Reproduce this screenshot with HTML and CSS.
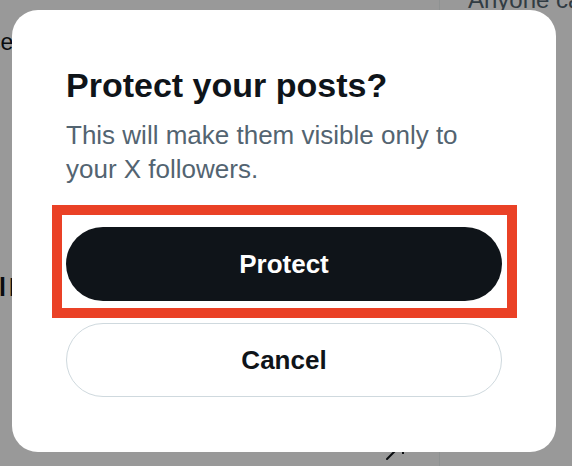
FILE: index.html
```html
<!DOCTYPE html>
<html lang="en">
<head>
<meta charset="utf-8">
<title>Protect your posts?</title>
<link rel="stylesheet" href="styles.css">
</head>
<body>
  <div class="page">
    <div class="main">
      <p class="frag frag-notice">Notice</p>
      <p class="frag frag-bars">lI</p>
      <svg class="frag-icon" viewBox="0 0 24 24" width="24" height="24" aria-hidden="true">
        <path d="M3 22 L13 12" stroke="#0f1419" stroke-width="2" stroke-linecap="round" fill="none"/>
        <path d="M19 14 L19 17" stroke="#0f1419" stroke-width="2" fill="none"/>
      </svg>
    </div>
    <div class="side">
      <p class="side-text">Anyone can reply</p>
    </div>
  </div>

  <div class="overlay">
    <div class="modal" role="dialog" aria-labelledby="dlg-title">
      <h1 id="dlg-title" class="modal-title">Protect your posts?</h1>
      <p class="modal-text">This will make them visible only to your X followers.</p>
      <div class="actions">
        <div class="highlight-wrap">
          <button class="btn btn-primary" type="button">Protect</button>
          <span class="highlight" aria-hidden="true"></span>
        </div>
        <button class="btn btn-secondary" type="button">Cancel</button>
      </div>
    </div>
  </div>
</body>
</html>
```

FILE: styles.css
```css
* { box-sizing: border-box; }

html, body {
  margin: 0;
  padding: 0;
}

body {
  width: 572px;
  height: 466px;
  overflow: hidden;
  background: #ffffff;
  font-family: "Liberation Sans", Arial, sans-serif;
  color: #0f1419;
}

/* ---------- page underneath ---------- */
.page {
  display: grid;
  grid-template-columns: 440px 1fr;
  height: 466px;
}

.main {
  display: flex;
  flex-direction: column;
  align-items: flex-start;
  border-right: 1px solid #eff3f4;
}

.frag {
  margin: 0;
  white-space: nowrap;
  color: #0f1419;
}

.frag-notice {
  margin-top: 30px;
  margin-left: -52px;
  font-size: 23px;
  line-height: 24px;
}

.frag-bars {
  margin-top: 221px;
  margin-left: -1px;
  font-size: 25px;
  font-weight: 700;
  line-height: 24px;
  letter-spacing: 3px;
}

.frag-icon {
  margin-top: 138px;
  margin-left: 384px;
}

.side {
  padding-left: 28px;
}

.side-text {
  margin: -12px 0 0;
  font-size: 24px;
  line-height: 24px;
  color: #536471;
  white-space: nowrap;
}

/* ---------- modal ---------- */
.overlay {
  position: fixed;
  inset: 0;
  background: rgba(0, 0, 0, 0.4);
  display: flex;
  align-items: flex-start;
  padding: 10px 0 0 12px;
}

.modal {
  width: 544px;
  background: #ffffff;
  border-radius: 26px;
  padding: 55px 54px 55px 54px;
  display: flex;
  flex-direction: column;
}

.modal-title {
  margin: 0;
  font-size: 34px;
  line-height: 40px;
  font-weight: 700;
  color: #0f1419;
}

.modal-text {
  margin: 13px 0 0;
  font-size: 26px;
  line-height: 34px;
  color: #536471;
}

.actions {
  margin-top: 41px;
  display: flex;
  flex-direction: column;
  gap: 22px;
}

.highlight-wrap {
  position: relative;
}

.btn {
  display: flex;
  align-items: center;
  justify-content: center;
  width: 100%;
  height: 74px;
  border-radius: 37px;
  font-family: "Liberation Sans", Arial, sans-serif;
  font-size: 26px;
  font-weight: 700;
  cursor: pointer;
}

.btn-primary {
  background: #0f1419;
  color: #ffffff;
  border: none;
}

.btn-secondary {
  background: #ffffff;
  color: #0f1419;
  border: 1.5px solid #cfd9de;
}

.highlight {
  position: absolute;
  top: -22px;
  bottom: -17px;
  left: -14px;
  right: -15px;
  border: 10px solid #ea4126;
  pointer-events: none;
}
```
